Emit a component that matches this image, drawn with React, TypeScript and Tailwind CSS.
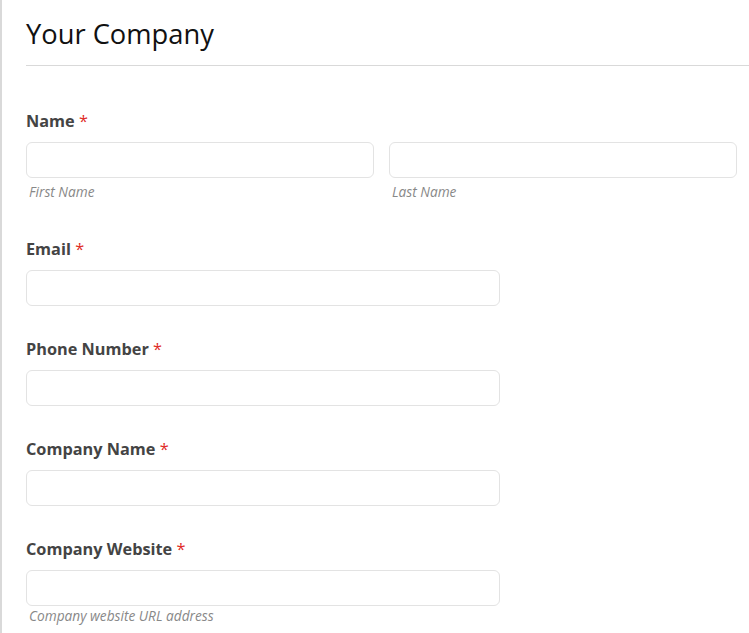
import React from "react";

const font = { fontFamily: '"Open Sans", "Noto Sans", sans-serif' };

function Label({ text }: { text: string }) {
  return (
    <div className="h-[24px] leading-[24px] text-[16.3px] font-bold text-[#444444] mb-[9px]">
      {text} <span className="text-[#e02b27] font-normal">*</span>
    </div>
  );
}

function Input({ className = "" }: { className?: string }) {
  return (
    <input
      type="text"
      className={`h-[36px] rounded-[6px] border border-[#e3e3e3] bg-white outline-none ${className}`}
    />
  );
}

export default function App() {
  return (
    <div style={font} className="min-h-[633px] w-[749px] bg-white border-l-2 border-[#d9d9d9]">
      <div className="pl-[24px]">
        <div className="pt-[14px] pb-[11px] border-b border-[#d9d9d9]">
          <h1 className="text-[27.3px] leading-[40px] text-[#111111] font-normal">Your Company</h1>
        </div>
        <div className="pr-[13px] pt-[43px]">
          <div>
            <Label text="Name" />
            <div className="grid grid-cols-2 gap-[15px] w-[711px]">
              <div>
                <Input className="w-full block" />
                <div className="mt-[4px] mb-[4px] pl-[3px] leading-[20px] text-[13.7px] italic text-[#888888]">First Name</div>
              </div>
              <div>
                <Input className="w-full block" />
                <div className="mt-[4px] mb-[4px] pl-[3px] leading-[20px] text-[13.7px] italic text-[#888888]">Last Name</div>
              </div>
            </div>
          </div>
          <div className="mt-[31px]">
            <Label text="Email" />
            <Input className="w-[474px] block" />
          </div>
          <div className="mt-[31px]">
            <Label text="Phone Number" />
            <Input className="w-[474px] block" />
          </div>
          <div className="mt-[31px]">
            <Label text="Company Name" />
            <Input className="w-[474px] block" />
          </div>
          <div className="mt-[31px]">
            <Label text="Company Website" />
            <Input className="w-[474px] block" />
            <div className="mt-0 pl-[3px] leading-[20px] text-[13.7px] italic text-[#888888]">Company website URL address</div>
          </div>
        </div>
      </div>
    </div>
  );
}
